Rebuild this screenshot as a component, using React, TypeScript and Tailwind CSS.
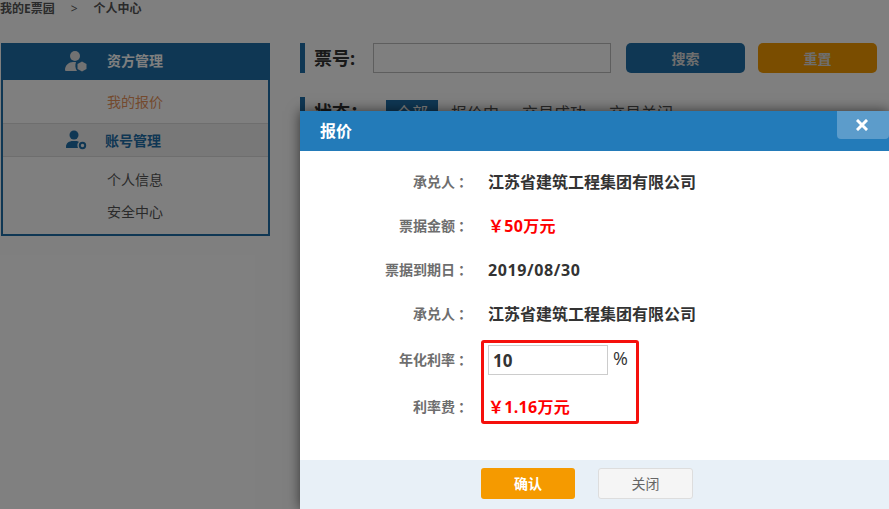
import React from "react";

const font = { fontFamily: '"Open Sans","Noto Sans CJK SC",sans-serif' };

function Row({ label, children, className = "" }: { label: string; children: React.ReactNode; className?: string }) {
  return (
    <div className={`flex items-center h-[24px] ${className}`}>
      <div className="w-[172px] text-right text-[14px] font-bold text-[#6e6e6e] leading-[24px] whitespace-nowrap">
        {label}
        <span className="ml-[3px]">：</span>
      </div>
      <div className="ml-[16px] text-[16px] font-bold text-[#333] leading-[24px] whitespace-nowrap">{children}</div>
    </div>
  );
}

export default function App() {
  return (
    <div className="relative w-[889px] h-[509px] overflow-hidden bg-white" style={font}>
      {/* page */}
      <div className="h-[17px] flex items-center text-[12px] font-bold text-[#555] leading-[17px] whitespace-nowrap">
        <span>我的E票园</span>
        <span className="ml-[16px] font-normal">&gt;</span>
        <span className="ml-[16px]">个人中心</span>
      </div>
      <div className="flex mt-[26px] pl-[1px]">
        <div className="w-[269px] h-[193px] border-2 border-[#1f6fa8]">
          <div className="h-[36px] -mt-[1px] -mx-[1px] bg-[#1f6fa8] flex items-center text-white text-[14px] font-bold leading-[34px]">
            <svg className="ml-[62px] w-[24px] h-[24px]" viewBox="0 0 24 24" fill="#e4e4e4">
              <circle cx="11" cy="6" r="5" />
              <path d="M1 20c0-5 4-8 8-8h3c-1 3-1 6 1 9H3c-1 0-2 0-2-1z" />
              <path d="M18 11.500l4.500 2.500v5L18 21.500 13.500 19v-5z" />
            </svg>
            <span className="ml-[19px] -mt-[2px]">资方管理</span>
          </div>
          <div className="h-[43px] flex items-center pl-[104px] text-[14px] text-[#e8945c]">我的报价</div>
          <div className="h-[34px] bg-[#f0f0f0] border-y border-[#dcdcdc] flex items-center text-[14px] font-bold text-[#1f6fa8]">
            <svg className="ml-[62px] w-[22px] h-[20px]" viewBox="0 0 22 20" fill="#1f6fa8">
              <circle cx="9" cy="5" r="4.500" />
              <path d="M1 17c0-4 3-6 7-6h3c1 0 2 0 3 1-2 1-2 4-1 6H2c-1 0-1 0-1-1z" />
              <circle cx="17.500" cy="15.500" r="2.700" fill="none" stroke="#1f6fa8" strokeWidth="2" />
            </svg>
            <span className="ml-[18px]">账号管理</span>
          </div>
          <div className="pl-[104px] pt-[7px] text-[14px] text-[#555] leading-[32px]">
            <div>个人信息</div>
            <div>安全中心</div>
          </div>
        </div>
        <div className="ml-[30px] flex-1">
          <div className="flex items-center h-[30px]">
            <div className="w-[5px] h-[30px] bg-[#1f6fa8]" />
            <div className="ml-[9px] w-[59px] text-[18px] font-bold text-[#333]">票号:</div>
            <div className="w-[238px] h-[30px] border border-[#bdbdbd] bg-white" />
            <div className="ml-[15px] w-[119px] h-[30px] rounded-[5px] bg-[#1f6fa8] text-[#ddd] text-[14px] font-bold flex items-center justify-center">搜索</div>
            <div className="ml-[13px] w-[119px] h-[30px] rounded-[5px] bg-[#f59a00] text-[#ddd] text-[14px] font-bold flex items-center justify-center">重置</div>
          </div>
          <div className="flex items-start h-[30px] mt-[24px] text-[16px] text-[#555] whitespace-nowrap">
            <div className="w-[5px] h-[30px] bg-[#1f6fa8] shrink-0" />
            <div className="ml-[9px] w-[72px] text-[18px] font-bold text-[#333] leading-[30px] shrink-0">状态：</div>
            <div className="w-[52px] h-[30px] mt-[3px] bg-[#1f6fa8] text-white text-center leading-[27px] shrink-0">全部</div>
            <div className="ml-[13px] mt-[3px] leading-[27px]">报价中</div>
            <div className="ml-[23px] mt-[3px] leading-[27px]">交易成功</div>
            <div className="ml-[23px] mt-[3px] leading-[27px]">交易关闭</div>
          </div>
        </div>
      </div>

      {/* overlay */}
      <div className="absolute inset-0 bg-[#000000]/50" />

      {/* modal */}
      <div className="absolute left-[300px] top-[111px] w-[589px] h-[398px] bg-white flex flex-col shadow-[0_0_12px_rgba(0,0,0,0.6)]">
        <div className="relative h-[40px] bg-[#237bb9] flex items-center pl-[20px] text-white text-[16px] font-bold shrink-0">
          报价
          <div className="absolute right-0 top-0 w-[52px] h-[28px] rounded-b-[4px] bg-[#5c9ccb] flex items-center justify-center pr-[2px]">
            <svg className="w-[12px] h-[12px]" viewBox="0 0 12 12" stroke="#fff" strokeWidth="3" strokeLinecap="square">
              <path d="M2 2l8 8M10 2l-8 8" />
            </svg>
          </div>
        </div>
        <div className="relative flex-1 pt-[19px]">
          <Row label="承兑人">江苏省建筑工程集团有限公司</Row>
          <Row label="票据金额" className="mt-[20px]"><span className="text-[#f00] tracking-[0.3px]">￥50万元</span></Row>
          <Row label="票据到期日" className="mt-[20px]"><span className="tracking-[0.6px]">2019/08/30</span></Row>
          <Row label="承兑人" className="mt-[20px]">江苏省建筑工程集团有限公司</Row>
          <Row label="年化利率" className="mt-[22px]">
            <div className="flex items-center">
              <div className="w-[120px] h-[30px] border border-[#ccc] pl-[4px] text-[17px] leading-[29px]">10</div>
              <span className="ml-[5px] -mt-[4px] text-[18px] font-normal">%</span>
            </div>
          </Row>
          <Row label="利率费" className="mt-[23px]"><span className="text-[#f00] tracking-[0.3px]">￥1.16万元</span></Row>
          <div className="absolute left-[181px] top-[189px] w-[158px] h-[84px] border-[3px] border-[#f5100c] rounded-[3px]" />
        </div>
        <div className="h-[49px] bg-[#e8f0f7] flex items-start pt-[8px] pl-[181px] shrink-0">
          <div className="w-[94px] h-[31px] rounded-[3px] bg-[#f59a00] text-white text-[14px] font-bold flex items-center justify-center">确认</div>
          <div className="ml-[23px] w-[95px] h-[31px] rounded-[3px] bg-[#f5f5f5] border border-[#ddd] text-[#666] text-[14px] flex items-center justify-center">关闭</div>
        </div>
      </div>
    </div>
  );
}
